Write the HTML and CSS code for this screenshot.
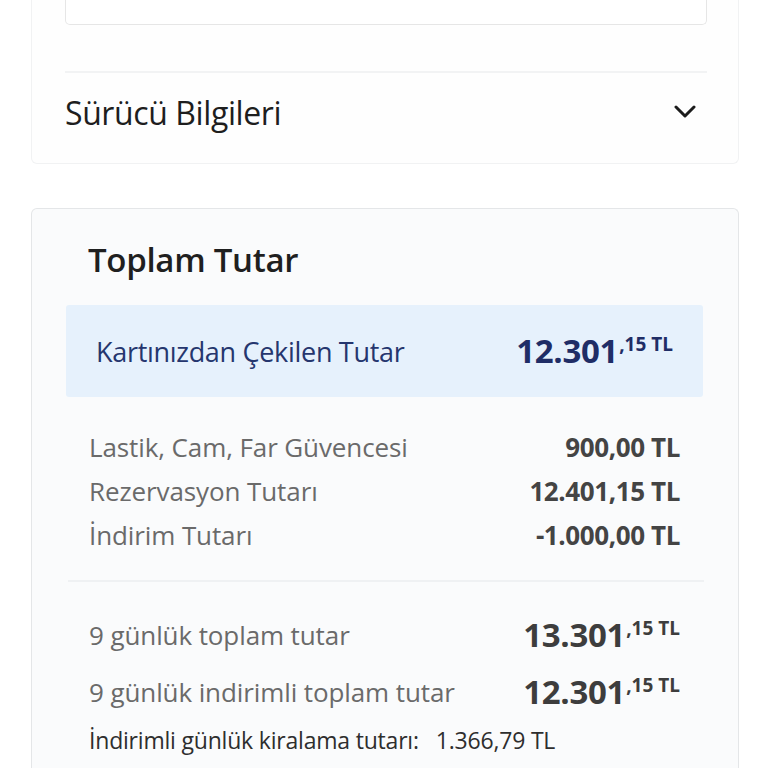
FILE: index.html
```html
<!DOCTYPE html>
<html lang="tr">
<head>
<meta charset="utf-8">
<link rel="stylesheet" href="styles.css">
</head>
<body>
<div class="page">
  <section class="card card-top">
    <div class="input-box"></div>
    <div class="divider-top"></div>
    <div class="acc-head">
      <span class="acc-title">Sürücü Bilgileri</span>
      <svg class="chev" width="22" height="14" viewBox="0 0 22 14"><path d="M2 2 L11 11 L20 2" fill="none" stroke="#1c1c1c" stroke-width="3" stroke-linecap="round" stroke-linejoin="round"/></svg>
    </div>
  </section>

  <section class="card card-total">
    <h2 class="total-title">Toplam Tutar</h2>
    <div class="charged">
      <span class="charged-label">Kartınızdan Çekilen Tutar</span>
      <span class="amount amount-blue">12.301<sup>,15 TL</sup></span>
    </div>
    <div class="lines">
      <div class="line"><span class="lbl">Lastik, Cam, Far Güvencesi</span><span class="val">900,00 TL</span></div>
      <div class="line"><span class="lbl">Rezervasyon Tutarı</span><span class="val">12.401,15 TL</span></div>
      <div class="line"><span class="lbl">İndirim Tutarı</span><span class="val">-1.000,00 TL</span></div>
    </div>
    <div class="divider"></div>
    <div class="totals">
      <div class="tline"><span class="lbl">9 günlük toplam tutar</span><span class="amount amount-gray">13.301<sup>,15 TL</sup></span></div>
      <div class="tline"><span class="lbl">9 günlük indirimli toplam tutar</span><span class="amount amount-gray">12.301<sup>,15 TL</sup></span></div>
      <div class="daily"><span class="daily-lbl">İndirimli günlük kiralama tutarı:</span><span class="daily-val">1.366,79 TL</span></div>
    </div>
  </section>
</div>
</body>
</html>
```

FILE: styles.css
```css
* { box-sizing: border-box; }
html, body { margin: 0; padding: 0; background: #ffffff; }
body { font-family: "Open Sans", "Noto Sans", sans-serif; color: #222; }
.page { padding: 0 29px 0 31px; }

.card { border: 1px solid #f1f2f3; border-radius: 6px; background: #fefefe; }
.card-top { margin-top: -40px; padding: 0 31px 0 33px; border-top: none; border-radius: 0 0 6px 6px; height: 204px; }
.input-box { height: 65px; border: 1px solid #e6e6e6; border-top: none; border-radius: 0 0 5px 5px; background: #fff; }
.divider-top { height: 2px; background: #f2f3f4; margin-top: 46px; }
.acc-head { display: flex; align-items: center; justify-content: space-between; height: 78px; padding-right: 11px; }
.acc-title { font-size: 32px; font-weight: 500; color: #1e1e1e; letter-spacing: -0.4px; }
.chev { display: block; }

.card-total { margin-top: 44px; border: 1px solid #e4e6e8; background: #fafbfc; padding: 30px 35px 40px 34px; border-bottom: none; border-radius: 6px 6px 0 0; }
.total-title { margin: 0 0 0 22px; font-size: 33px; line-height: 42px; font-weight: 600; color: #1f1f1f; letter-spacing: -0.3px; }
.charged { margin-top: 24px; height: 92px; background: #e6f1fc; border-radius: 3px; display: flex; align-items: center; justify-content: space-between; padding: 0 30px; }
.charged-label { font-size: 27px; font-weight: 500; color: #25366e; letter-spacing: -0.3px; }

.amount { font-weight: 700; font-size: 33px; line-height: 44px; letter-spacing: -0.3px; }
.amount sup { font-size: 19px; font-weight: 700; vertical-align: top; position: relative; top: -7px; margin-left: 1px; letter-spacing: 0; }
.amount-blue { color: #1f2d66; }
.amount-gray { color: #3d3d3d; }

.lines { padding: 28px 23px 23px 23px; }
.line { display: flex; justify-content: space-between; align-items: center; height: 44px; }
.lbl { font-size: 26px; color: #6a6a6a; letter-spacing: -0.1px; }
.val { font-size: 26px; font-weight: 700; color: #444; letter-spacing: -0.4px; }

.divider { height: 2px; background: #eff1f3; margin: 0 -1px 0 2px; }

.totals { padding: 24px 23px 0 23px; }
.tline { display: flex; justify-content: space-between; align-items: center; height: 57px; }
.daily { display: flex; align-items: center; height: 40px; }
.daily-lbl { font-size: 23px; color: #2e2e2e; letter-spacing: -0.2px; }
.daily-val { font-size: 23px; color: #2e2e2e; margin-left: 17px; letter-spacing: -0.2px; }
```
